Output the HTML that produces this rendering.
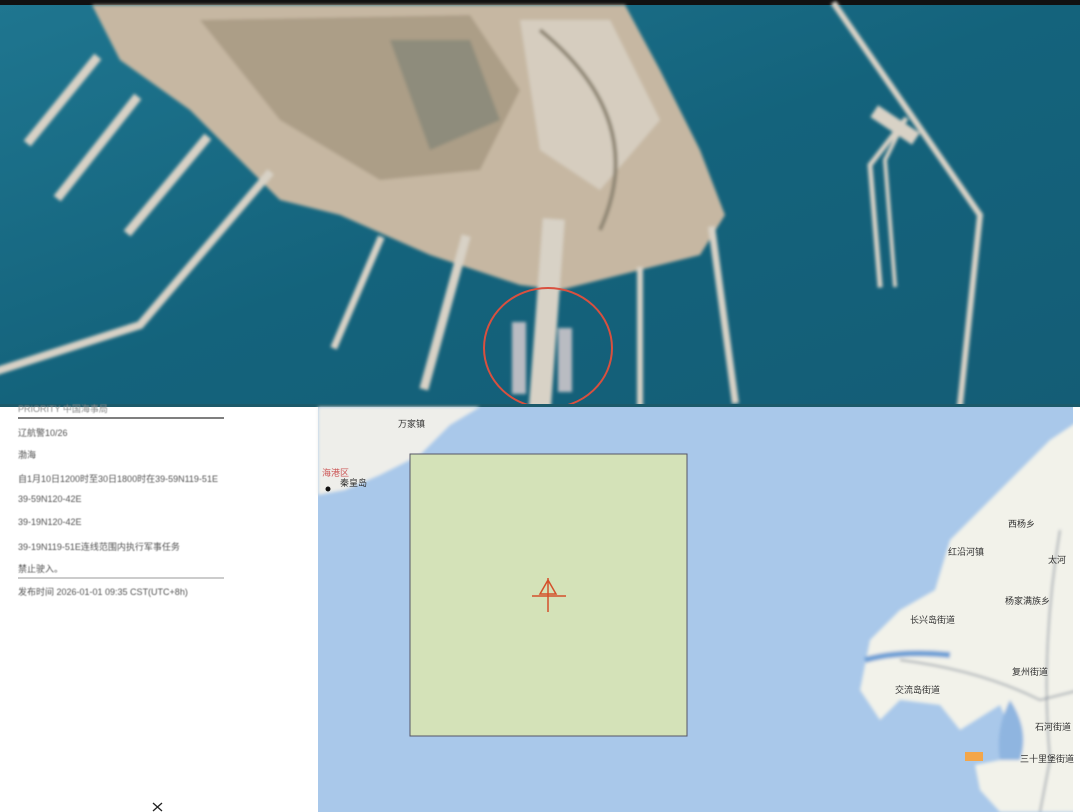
<!DOCTYPE html>
<html><head><meta charset="utf-8"><style>
html,body{margin:0;padding:0;width:1080px;height:812px;overflow:hidden;background:#fff;font-family:"Liberation Sans","Noto Sans CJK SC",sans-serif}
.t{position:absolute;font-size:9px;color:#555;left:18px;filter:blur(0.5px)}
.m{position:absolute;font-size:9px;color:#333;filter:blur(0.3px)}
</style></head><body>
<svg width="1080" height="812" style="position:absolute;left:0;top:0">
<defs>
<filter id="b"><feGaussianBlur stdDeviation="1.5"/></filter>
<linearGradient id="sea" x1="0" y1="0" x2="1" y2="1"><stop offset="0" stop-color="#1f7690"/><stop offset="0.5" stop-color="#14637c"/><stop offset="1" stop-color="#145d76"/></linearGradient>
</defs>
<rect x="0" y="0" width="1080" height="406" fill="url(#sea)"/>
<rect x="0" y="0" width="1080" height="5" fill="#111"/>
<g filter="url(#b)">
<path d="M92,5 L625,5 L660,70 L700,150 L725,215 L700,255 L600,280 L560,290 L520,285 L430,255 L340,215 L280,200 L190,110 L120,60 Z" fill="#c6b7a2"/>
<path d="M200,20 L470,15 L520,90 L480,170 L380,180 L280,120 Z" fill="#9b8d74" opacity="0.6"/>
<path d="M390,40 L470,40 L500,120 L430,150 Z" fill="#6f7a70" opacity="0.5"/>
<path d="M520,20 L610,20 L660,120 L600,190 L540,150 Z" fill="#ddd6cc" opacity="0.7"/>
<path d="M540,30 Q650,120 600,230" stroke="#8d8472" stroke-width="4" fill="none"/>
<g stroke="#d8d2c6" stroke-linecap="square" fill="none">
<path d="M95,60 L30,140" stroke-width="9"/>
<path d="M135,100 L60,195" stroke-width="9"/>
<path d="M205,140 L130,230" stroke-width="9"/>
<path d="M268,175 L140,325 L0,370" stroke-width="8"/>
<path d="M380,240 L335,345" stroke-width="7"/>
<path d="M465,240 L425,385" stroke-width="9"/>
<path d="M553,230 L540,405" stroke-width="22"/>
<path d="M640,270 L640,405" stroke-width="6"/>
<path d="M712,230 L735,400" stroke-width="7"/>
<path d="M835,5 L980,215 L960,405" stroke-width="6"/>
<path d="M905,120 L870,165 L880,285" stroke-width="5"/>
<path d="M905,120 L885,160 L895,285" stroke-width="4"/>
<path d="M880,115 L910,135" stroke-width="14"/>
</g>
<rect x="512" y="322" width="14" height="72" fill="#b9bcc2"/>
<rect x="558" y="328" width="14" height="64" fill="#b9bcc2"/>
</g>
<ellipse cx="548" cy="348" rx="64" ry="60" fill="none" stroke="#d9503f" stroke-width="2"/>
<rect x="0" y="406" width="318" height="406" fill="#fff"/>
<rect x="0" y="404" width="1080" height="3" fill="#1c5a6a"/>
<rect x="318" y="407" width="762" height="405" fill="#a9c8ea"/>
<g filter="url(#b)">
<path d="M318,407 L480,407 L450,425 L420,455 L380,475 L345,490 L318,495 Z" fill="#eeeeea"/>
<path d="M1080,420 L1050,440 L1020,470 L990,500 L950,540 L935,590 L900,610 L870,640 L860,690 L880,720 L900,700 L940,705 L960,730 L1000,705 L1015,740 L1000,760 L975,765 L980,790 L1000,812 L1080,812 Z" fill="#f2f2ea"/>
<path d="M865,660 Q900,650 950,655" stroke="#6fa0d6" stroke-width="6" fill="none"/>
<path d="M1010,700 Q1030,730 1020,760 L1000,760 Q995,730 1010,700Z" fill="#8fb5e0"/>
<path d="M900,660 Q980,670 1040,700 L1080,690" stroke="#7f8a9a" stroke-width="1.5" fill="none"/>
<path d="M1060,530 Q1040,650 1050,760 L1040,812" stroke="#7f8a9a" stroke-width="1.5" fill="none"/>
</g>
<rect x="1073" y="407" width="7" height="405" fill="#fff"/>
<rect x="410" y="454" width="277" height="282" fill="#d4e2b8" stroke="#556" stroke-width="1"/>
<path d="M548,578 L548,612 M532,596 L566,596" stroke="#d4502a" stroke-width="1.5"/>
<path d="M540,594 L548,580 L556,594 Z" fill="none" stroke="#d4502a" stroke-width="1.5"/>
<rect x="965" y="752" width="18" height="9" fill="#f3a64a"/>
<circle cx="328" cy="489" r="2.5" fill="#111"/>
<line x1="18" y1="418" x2="224" y2="418" stroke="#555" stroke-width="1.5"/>
<line x1="18" y1="578" x2="224" y2="578" stroke="#999" stroke-width="1"/>
<path d="M153,803 L162,811 M162,803 L153,811" stroke="#222" stroke-width="1.3"/>
</svg>
<div class="t" style="top:402px;color:#888">PRIORITY 中国海事局</div>
<div class="t" style="top:426px">辽航警10/26</div>
<div class="t" style="top:448px">渤海</div>
<div class="t" style="top:472px">自1月10日1200时至30日1800时在39-59N119-51E</div>
<div class="t" style="top:494px">39-59N120-42E</div>
<div class="t" style="top:517px">39-19N120-42E</div>
<div class="t" style="top:540px">39-19N119-51E连线范围内执行军事任务</div>
<div class="t" style="top:562px">禁止驶入。</div>
<div class="t" style="top:585px">发布时间 2026-01-01 09:35 CST(UTC+8h)</div>
<div class="m" style="left:398px;top:417px">万家镇</div>
<div class="m" style="left:322px;top:466px;color:#c55">海港区</div>
<div class="m" style="left:340px;top:476px">秦皇岛</div>
<div class="m" style="left:1008px;top:517px">西杨乡</div>
<div class="m" style="left:948px;top:545px">红沿河镇</div>
<div class="m" style="left:1048px;top:553px">太河</div>
<div class="m" style="left:1005px;top:594px">杨家满族乡</div>
<div class="m" style="left:910px;top:613px">长兴岛街道</div>
<div class="m" style="left:1012px;top:665px">复州街道</div>
<div class="m" style="left:895px;top:683px">交流岛街道</div>
<div class="m" style="left:1035px;top:720px">石河街道</div>
<div class="m" style="left:1020px;top:752px">三十里堡街道</div>
</body></html>
